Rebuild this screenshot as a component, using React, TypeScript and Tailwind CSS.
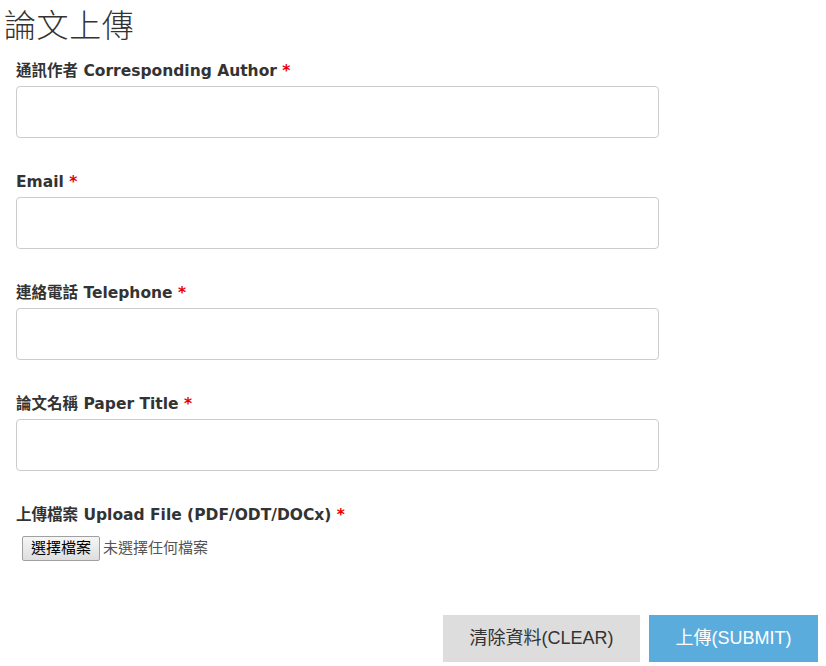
import React from "react";

const labelFont = { fontFamily: '"DejaVu Sans", "Noto Sans CJK TC", sans-serif' };

function Field({ label }: { label: string }) {
  return (
    <div className="mb-[33px]">
      <div className="h-[20px] pt-[1px] text-[15.5px] leading-[20px] font-bold text-[#333]" style={labelFont}>
        {label} <span className="text-[#e60000]">*</span>
      </div>
      <div className="mt-[6px] h-[52px] w-[643px] rounded-[4px] border border-[#cccccc] bg-white"></div>
    </div>
  );
}

export default function App() {
  return (
    <div className="relative h-[666px] w-[826px] bg-white text-[#333]" style={{ fontFamily: '"Liberation Sans", "Noto Sans CJK TC", sans-serif' }}>
      <h1 className="ml-[4px] text-[32px] font-light leading-[47px] tracking-[0.6px] text-[#333]" style={{ fontFamily: '"Noto Sans CJK TC", sans-serif' }}>
        論文上傳
      </h1>
      <div className="mt-[13px] pl-[16px]">
        <Field label="通訊作者 Corresponding Author" />
        <Field label="Email" />
        <Field label="連絡電話 Telephone" />
        <Field label="論文名稱 Paper Title" />
        <div className="h-[20px] pt-[1px] text-[15.5px] leading-[20px] font-bold text-[#333]" style={labelFont}>
          上傳檔案 Upload File (PDF/ODT/DOCx) <span className="text-[#e60000]">*</span>
        </div>
        <div className="mt-[12px] flex items-center pl-[6px]">
          <div className="flex h-[25px] w-[78px] items-center justify-center rounded-[2px] border border-[#a0a0a0] bg-gradient-to-b from-[#f6f6f6] to-[#dedede] text-[15px] text-black">
            選擇檔案
          </div>
          <span className="ml-[3px] text-[15px] text-[#555]">未選擇任何檔案</span>
        </div>
      </div>
      <div className="mt-[54px] flex justify-end gap-[9px] pr-[8px]">
        <div className="flex h-[47px] w-[197px] items-center justify-center bg-[#dddddd] text-[18px] text-[#333]">
          清除資料(CLEAR)
        </div>
        <div className="flex h-[47px] w-[169px] items-center justify-center bg-[#5aacdd] text-[18px] text-white">
          上傳(SUBMIT)
        </div>
      </div>
    </div>
  );
}
